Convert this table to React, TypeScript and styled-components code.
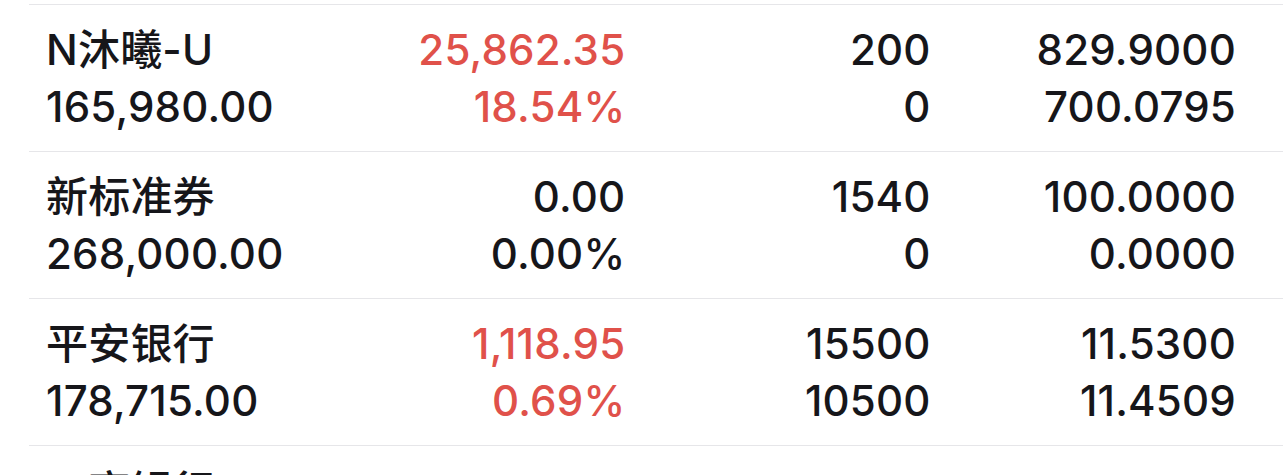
import React from "react";
import styled, { createGlobalStyle } from "styled-components";

const GlobalStyle = createGlobalStyle`
  html, body {
    margin: 0;
    padding: 0;
    background: #ffffff;
    overflow: hidden;
  }

  body {
    font-family: Inter, "Noto Sans CJK SC", "Noto Sans", sans-serif;
    color: #16161a;
    -webkit-font-smoothing: antialiased;
  }
`;

// STYLES
const Page = styled.main`
  height: 475px;
  padding-top: 4px;
  padding-left: 29px;
  box-sizing: border-box;
  overflow: hidden;
`;

const Row = styled.section`
  height: 146px;
  border-top: 1px solid #e6e6e9;
  padding: 0 47px 0 17px;

  display: grid;
  grid-template-columns: 274px repeat(3, 1fr);
  align-items: center;
`;

const Cell = styled.div<{ $align: "left" | "right" }>`
  display: flex;
  flex-direction: column;
  align-items: ${({ $align }) => ($align === "left" ? "flex-start" : "flex-end")};
`;

const Line = styled.span<{ $tone: "up" | "plain" }>`
  font-size: 42px;
  font-weight: 500;
  line-height: 57px;
  letter-spacing: 0.2px;
  white-space: nowrap;
  color: ${({ $tone }) => ($tone === "up" ? "#e0514a" : "#16161a")};
`;

type Holding = {
  name: string;
  value: string;
  profit: string;
  ratio: string;
  up: boolean;
  qty: string;
  avail: string;
  price: string;
  cost: string;
};

const holdings: Holding[] = [
  {
    name: "N沐曦-U",
    value: "165,980.00",
    profit: "25,862.35",
    ratio: "18.54%",
    up: true,
    qty: "200",
    avail: "0",
    price: "829.9000",
    cost: "700.0795",
  },
  {
    name: "新标准券",
    value: "268,000.00",
    profit: "0.00",
    ratio: "0.00%",
    up: false,
    qty: "1540",
    avail: "0",
    price: "100.0000",
    cost: "0.0000",
  },
  {
    name: "平安银行",
    value: "178,715.00",
    profit: "1,118.95",
    ratio: "0.69%",
    up: true,
    qty: "15500",
    avail: "10500",
    price: "11.5300",
    cost: "11.4509",
  },
  {
    name: "工商银行",
    value: "120,560.00",
    profit: "2,406.00",
    ratio: "2.04%",
    up: true,
    qty: "20000",
    avail: "20000",
    price: "6.0280",
    cost: "5.9077",
  },
];

const App: React.FC = () => {
  return (
    <>
      <GlobalStyle />
      <Page>
        {holdings.map((h) => {
          const tone = h.up ? "up" : "plain";
          return (
            <Row key={h.name}>
              <Cell $align="left">
                <Line $tone="plain">{h.name}</Line>
                <Line $tone="plain">{h.value}</Line>
              </Cell>
              <Cell $align="right">
                <Line $tone={tone}>{h.profit}</Line>
                <Line $tone={tone}>{h.ratio}</Line>
              </Cell>
              <Cell $align="right">
                <Line $tone="plain">{h.qty}</Line>
                <Line $tone="plain">{h.avail}</Line>
              </Cell>
              <Cell $align="right">
                <Line $tone="plain">{h.price}</Line>
                <Line $tone="plain">{h.cost}</Line>
              </Cell>
            </Row>
          );
        })}
      </Page>
    </>
  );
};

export default App;
